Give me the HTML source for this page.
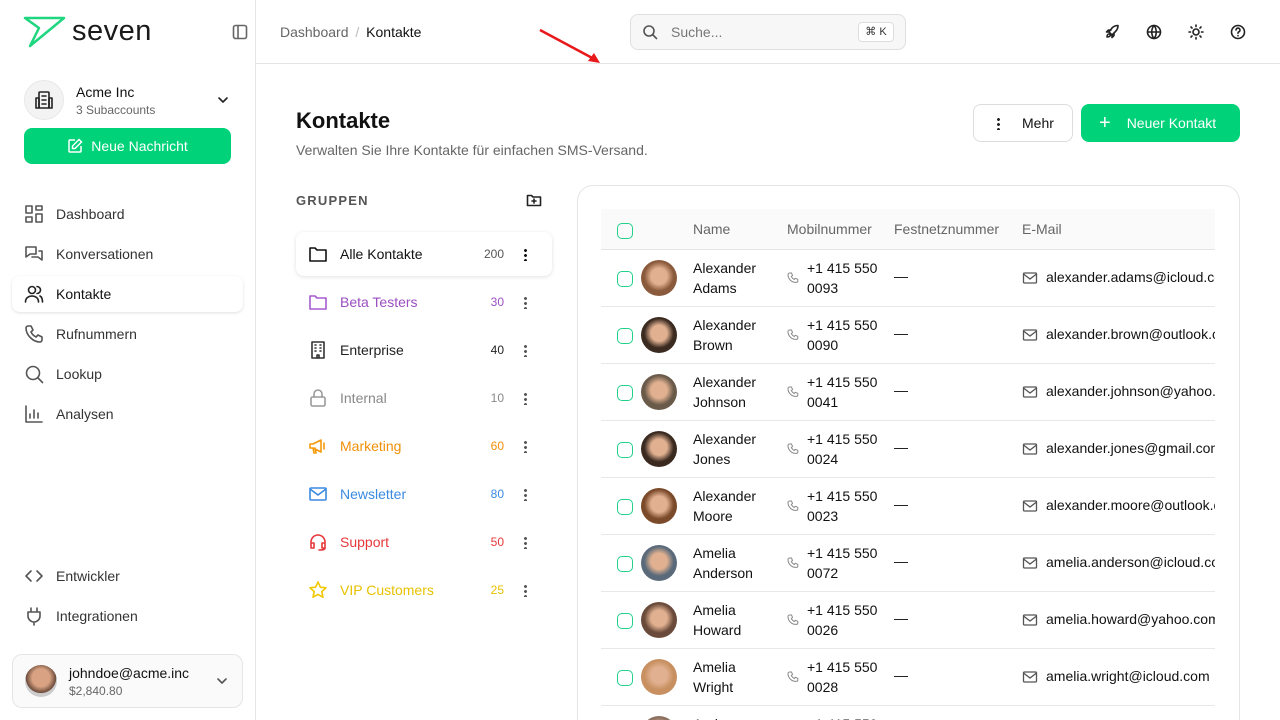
<!DOCTYPE html>
<html style="width:1280px;height:720px;overflow:hidden"><head><meta charset="utf-8"><style>
*{box-sizing:border-box;margin:0;padding:0}
body{width:1280px;height:720px;overflow:hidden;font-family:"Liberation Sans",sans-serif;color:#111;background:#fff;position:relative}
.sb{position:absolute;left:0;top:0;width:256px;height:720px;border-right:1px solid #e5e5e5;background:#fff}
.ab{position:absolute}
.nav{position:absolute;left:12px;width:231px;height:36px;border-radius:8px;display:flex;align-items:center;padding-left:12px;font-size:14px;color:#333}
.nav svg{width:20px;height:20px;margin-right:12px;fill:none;stroke:#555;stroke-width:1.6;stroke-linecap:round;stroke-linejoin:round}
.hdr{position:absolute;left:256px;top:0;right:0;height:64px;border-bottom:1px solid #e5e5e5}
.ico{fill:none;stroke:#222;stroke-width:1.6;stroke-linecap:round;stroke-linejoin:round}
.grp{position:absolute;left:296px;width:256px;height:44px;display:flex;align-items:center;padding-left:12px;font-size:14px;border-radius:8px}
.grp svg{width:20px;height:20px;margin-right:12px;fill:none;stroke-width:1.6;stroke-linecap:round;stroke-linejoin:round}
.grp .n{position:absolute;right:48px;font-size:12px}
.grp .d{position:absolute;right:25px;width:3px;height:13px;background:radial-gradient(circle,#555 1.3px,transparent 1.6px) 0 0/3px 5px repeat-y}
.row{position:absolute;left:0;width:614px;height:57px;border-bottom:1px solid #e8e8e8;font-size:14px;color:#111}
.row .cb{position:absolute;left:16px;top:21px;width:16px;height:16px;border:1.5px solid #22d08a;border-radius:5px}
.row .av{position:absolute;left:40px;top:10px;width:36px;height:36px;border-radius:50%}
.row .nm{position:absolute;left:92px;top:8px;line-height:20px}
.row .ph{position:absolute;left:186px;top:8px;line-height:20px;padding-left:20px}
.row .ph svg{position:absolute;left:0;top:14px}
.row .ds{position:absolute;left:293px;top:18px}
.row .em{position:absolute;left:421px;top:19px;padding-left:24px;white-space:nowrap;width:193px;overflow:hidden}
.row .em svg{position:absolute;left:0;top:1px}
.wrap{position:absolute;left:0;top:0;width:1280px;height:720px;overflow:hidden}
</style></head><body><div class="wrap">
<div class="sb">
<svg class="ab" style="left:23px;top:16px" width="44" height="32" viewBox="0 0 44 32"><path d="M2 2 L41 2 L7 30 L16 12 Z" fill="none" stroke="#1ed67f" stroke-width="2.5" stroke-linejoin="round"/></svg>
<div class="ab" style="left:72px;top:15px;font-size:29px;color:#1a1a1a;letter-spacing:0.5px">seven</div>
<svg class="ab ico" style="left:232px;top:24px;stroke:#666" width="16" height="16" viewBox="0 0 16 16"><rect x="1.5" y="1.5" width="13" height="13" rx="2"/><path d="M6 2v12"/></svg>
<div class="ab" style="left:24px;top:80px;width:40px;height:40px;border-radius:50%;background:#f3f3f3;border:1px solid #e8e8e8"></div>
<svg class="ab ico" style="left:34px;top:90px" width="20" height="20" viewBox="0 0 20 20"><rect x="5" y="2" width="10" height="16" rx="1"/><path d="M2 8h3v10H2zM15 8h3v10h-3zM8 6h4M8 10h4M8 14h4"/></svg>
<div class="ab" style="left:76px;top:84px;font-size:14px;color:#111">Acme Inc</div>
<div class="ab" style="left:76px;top:103px;font-size:12px;color:#666">3 Subaccounts</div>
<svg class="ab ico" style="left:216px;top:93px" width="14" height="14" viewBox="0 0 14 14"><path d="M3 5l4 4 4-4"/></svg>
<div class="ab" style="left:24px;top:128px;width:207px;height:36px;border-radius:8px;background:#00d27a;color:#fff;font-size:14px;display:flex;align-items:center;justify-content:center"><svg width="16" height="16" viewBox="0 0 16 16" style="margin-right:8px;fill:none;stroke:#fff;stroke-width:1.5"><path d="M8 2H3a1 1 0 0 0-1 1v10a1 1 0 0 0 1 1h10a1 1 0 0 0 1-1V8"/><path d="M12 1.5l2.5 2.5L8 10.5H5.5V8z"/></svg>Neue Nachricht</div>
<div class="nav" style="top:196px"><svg viewBox="0 0 20 20"><rect x="2" y="2" width="6" height="7"/><rect x="12" y="2" width="6" height="4"/><rect x="12" y="10" width="6" height="8"/><rect x="2" y="13" width="6" height="5"/></svg>Dashboard</div>
<div class="nav" style="top:236px"><svg viewBox="0 0 20 20"><path d="M2 3h10v7H6l-4 3zM8 13h6l4 3V7h-3"/></svg>Konversationen</div>
<div class="nav" style="top:276px;background:#fff;box-shadow:0 1px 3px rgba(0,0,0,.12);color:#111"><svg viewBox="0 0 20 20" style="stroke:#222"><circle cx="8" cy="6" r="3.5"/><path d="M1.5 18c0-4 3-6 6.5-6s6.5 2 6.5 6M13 2.5a3.5 3.5 0 0 1 0 7M16 12c1.5.8 2.5 3 2.5 6"/></svg>Kontakte</div>
<div class="nav" style="top:316px"><svg viewBox="0 0 20 20"><path d="M4 2h3l2 4-2 2c1 2 3 4 5 5l2-2 4 2v3c0 1-1 2-2 2C9 18 2 11 2 4c0-1 1-2 2-2z"/></svg>Rufnummern</div>
<div class="nav" style="top:356px"><svg viewBox="0 0 20 20"><circle cx="9" cy="9" r="6.5"/><path d="M14 14l4.5 4.5"/></svg>Lookup</div>
<div class="nav" style="top:396px"><svg viewBox="0 0 20 20"><path d="M2 2v16h16M6 14v-4M10 14V6M14 14V9"/></svg>Analysen</div>
<div class="nav" style="top:558px"><svg viewBox="0 0 20 20"><path d="M7 5l-5 5 5 5M13 5l5 5-5 5"/></svg>Entwickler</div>
<div class="nav" style="top:598px"><svg viewBox="0 0 20 20"><path d="M7 2v4M13 2v4M4 6h12v4a6 6 0 0 1-12 0zM10 16v3"/></svg>Integrationen</div>
<div class="ab" style="left:12px;top:654px;width:231px;height:54px;border:1px solid #e5e5e5;border-radius:10px;background:#fafafa"></div>
<div class="ab" style="left:25px;top:665px;width:32px;height:32px;border-radius:50%;background:radial-gradient(circle at 50% 40%,#d9a383 0 35%,#6b4a3a 60%,#ccc 62%)"></div>
<div class="ab" style="left:69px;top:665px;font-size:14px;color:#111">johndoe@acme.inc</div>
<div class="ab" style="left:69px;top:684px;font-size:12px;color:#666">$2,840.80</div>
<svg class="ab ico" style="left:215px;top:674px;stroke:#555" width="14" height="14" viewBox="0 0 14 14"><path d="M3 5l4 4 4-4"/></svg>
</div>
<div class="hdr">
<div class="ab" style="left:24px;top:24px;font-size:14px;color:#666">Dashboard <span style="color:#bbb;margin:0 3px">/</span> <span style="color:#111">Kontakte</span></div>
<div class="ab" style="left:374px;top:14px;width:276px;height:36px;border:1px solid #e0e0e0;border-radius:8px;background:#f7f7f7"></div>
<svg class="ab ico" style="left:386px;top:24px;stroke:#555" width="16" height="16" viewBox="0 0 16 16"><circle cx="7" cy="7" r="5"/><path d="M11 11l3.5 3.5"/></svg>
<div class="ab" style="left:415px;top:24px;font-size:14px;color:#777">Suche...</div>
<div class="ab" style="left:602px;top:22px;width:36px;height:20px;border:1px solid #ddd;border-radius:4px;background:#fff;font-size:11px;text-align:center;line-height:18px;color:#333">⌘ K</div>
<svg class="ab ico" style="left:848px;top:24px" width="16" height="16" viewBox="0 0 16 16"><path d="M3 13c0-2 1-3 2-3s2 1 1 2-3 1-3 1zM6 9l1 1M5 8l3-4c2-2 4-2.5 6-2.5 0 2-.5 4-2.5 6L8 11zM5 8H2.5l2-2H7M8 11v2.5l2-2V9"/></svg>
<svg class="ab ico" style="left:890px;top:24px" width="16" height="16" viewBox="0 0 16 16"><circle cx="8" cy="8" r="6.5"/><path d="M1.5 8h13M8 1.5c-3 3.5-3 9.5 0 13M8 1.5c3 3.5 3 9.5 0 13"/></svg>
<svg class="ab ico" style="left:932px;top:24px" width="16" height="16" viewBox="0 0 16 16"><circle cx="8" cy="8" r="3"/><path d="M8 1v1.5M8 13.5V15M1 8h1.5M13.5 8H15M3 3l1 1M12 12l1 1M3 13l1-1M12 4l1-1"/></svg>
<svg class="ab ico" style="left:974px;top:24px" width="16" height="16" viewBox="0 0 16 16"><circle cx="8" cy="8" r="6.5"/><path d="M6 6a2 2 0 1 1 2.5 2c-.5.2-.5.7-.5 1.2M8 11.5v.3"/></svg>
</div>
<svg class="ab" style="left:538px;top:28px" width="66" height="38" viewBox="0 0 66 38"><path d="M2 2L58 32" stroke="#e8191b" stroke-width="2.5"/><path d="M62 35L50 33L56 25Z" fill="#e8191b"/></svg>
<div class="ab" style="left:296px;top:108px;font-size:22px;font-weight:bold;color:#111">Kontakte</div>
<div class="ab" style="left:296px;top:142px;font-size:14px;color:#666">Verwalten Sie Ihre Kontakte für einfachen SMS-Versand.</div>
<div class="ab" style="left:973px;top:104px;width:100px;height:38px;border:1px solid #ddd;border-radius:8px;font-size:14px;display:flex;align-items:center;padding-left:23px"><span style="width:3px;height:13px;margin-right:22px;background:radial-gradient(circle,#222 1.3px,transparent 1.6px) 0 0/3px 5px repeat-y"></span>Mehr</div>
<div class="ab" style="left:1081px;top:104px;width:159px;height:38px;border-radius:8px;background:#00d27a;color:#fff;font-size:14px;display:flex;align-items:center;padding-left:18px"><span style="font-size:20px;margin-right:16px;font-weight:300">+</span>Neuer Kontakt</div>
<div class="ab" style="left:296px;top:193px;font-size:13px;color:#555;letter-spacing:1.2px;font-weight:bold">GRUPPEN</div>
<svg class="ab ico" style="left:526px;top:192px" width="16" height="16" viewBox="0 0 16 16"><path d="M1.5 3.5h4l1.5 1.5h7.5v8.5h-13zM8 7v4M6 9h4"/></svg>
<div class="grp" style="top:232px;background:#fff;box-shadow:0 1px 4px rgba(0,0,0,.12);color:#111"><svg viewBox="0 0 20 20" style="stroke:#111"><path d="M2 4h5l2 2h9v11H2z"/></svg>Alle Kontakte<span class="n" style="color:#555">200</span><span class="d" style="background-image:radial-gradient(circle,#111 1.3px,transparent 1.6px)"></span></div>
<div class="grp" style="top:280px;color:#9b4fc0"><svg viewBox="0 0 20 20" style="stroke:#a55bd0"><path d="M2 4h5l2 2h9v11H2z"/></svg>Beta Testers<span class="n">30</span><span class="d"></span></div>
<div class="grp" style="top:328px;color:#222"><svg viewBox="0 0 20 20" style="stroke:#333"><rect x="4" y="2" width="12" height="16"/><path d="M7 5h1M12 5h1M7 8h1M12 8h1M7 11h1M12 11h1M9 18v-3h2v3"/></svg>Enterprise<span class="n">40</span><span class="d"></span></div>
<div class="grp" style="top:376px;color:#888"><svg viewBox="0 0 20 20" style="stroke:#999"><rect x="3" y="9" width="14" height="9" rx="1.5"/><path d="M6 9V6a4 4 0 0 1 8 0v3"/></svg>Internal<span class="n">10</span><span class="d"></span></div>
<div class="grp" style="top:424px;color:#f0900a"><svg viewBox="0 0 20 20" style="stroke:#f59a0a"><path d="M2 8v4h3l8 4V4L5 8zM5 12l1 5h2l-1-5M16 7v6"/></svg>Marketing<span class="n">60</span><span class="d"></span></div>
<div class="grp" style="top:472px;color:#3a8ae0"><svg viewBox="0 0 20 20" style="stroke:#3a8ae0"><rect x="2" y="4" width="16" height="12" rx="1"/><path d="M2 5l8 6 8-6"/></svg>Newsletter<span class="n">80</span><span class="d"></span></div>
<div class="grp" style="top:520px;color:#e5383b"><svg viewBox="0 0 20 20" style="stroke:#e5383b"><path d="M3 13v-3a7 7 0 0 1 14 0v3M3 11h3v5H3zM14 11h3v5h-3zM17 16c0 2-3 2-6 2"/></svg>Support<span class="n">50</span><span class="d"></span></div>
<div class="grp" style="top:568px;color:#e8c200"><svg viewBox="0 0 20 20" style="stroke:#f0c800"><path d="M10 2l2.4 5.2 5.6.6-4.2 3.8 1.2 5.6L10 14.4 5 17.2l1.2-5.6L2 7.8l5.6-.6z"/></svg>VIP Customers<span class="n">25</span><span class="d"></span></div>
<div class="ab" style="left:577px;top:185px;width:663px;height:535px;border:1px solid #e5e5e5;border-bottom:none;border-radius:16px 16px 0 0"></div>
<div class="ab" style="left:601px;top:209px;width:614px;height:41px;background:#fafafa;border-bottom:1px solid #e5e5e5;font-size:14px;color:#666">
<div class="ab" style="left:16px;top:14px;width:16px;height:16px;border:1.5px solid #22d08a;border-radius:5px"></div>
<span class="ab" style="left:92px;top:12px">Name</span><span class="ab" style="left:186px;top:12px">Mobilnummer</span><span class="ab" style="left:293px;top:12px">Festnetznummer</span><span class="ab" style="left:421px;top:12px">E-Mail</span></div>
<div id="rows" class="ab" style="left:601px;top:250px;width:614px;height:470px;overflow:hidden"></div>
</div>
<script>
var d=[["Alexander","Adams","0093","alexander.adams@icloud.com","#8a5a3c"],["Alexander","Brown","0090","alexander.brown@outlook.com","#3a2a20"],["Alexander","Johnson","0041","alexander.johnson@yahoo.com","#6a5a4a"],["Alexander","Jones","0024","alexander.jones@gmail.com","#3a2a20"],["Alexander","Moore","0023","alexander.moore@outlook.com","#7a4a2a"],["Amelia","Anderson","0072","amelia.anderson@icloud.com","#5a6a7a"],["Amelia","Howard","0026","amelia.howard@yahoo.com","#6a4a3a"],["Amelia","Wright","0028","amelia.wright@icloud.com","#c89060"],["Andrew","Baker","0031","andrew.baker@gmail.com","#8a7060"]];
var h="";d.forEach(function(r,i){h+='<div class="row" style="top:'+(i*57)+'px"><div class="cb"></div><div class="av" style="background:radial-gradient(circle at 50% 45%,#e0b090 0 30%,'+r[4]+' 55%)"></div><div class="nm">'+r[0]+'<br>'+r[1]+'</div><div class="ph"><svg width="12" height="12" viewBox="0 0 12 12" fill="none" stroke="#888" stroke-width="1"><path d="M2.5 1h2l1 2.5-1.2 1c.6 1.3 1.7 2.4 3 3l1-1.2 2.5 1v2c0 .5-.5 1-1 1C5 11 1 7 1 2.5c0-.5.5-1.5 1.5-1.5z"/></svg>+1 415 550<br>'+r[2]+'</div><div class="ds">—</div><div class="em"><svg width="16" height="16" viewBox="0 0 16 16" fill="none" stroke="#555" stroke-width="1.3"><rect x="1.5" y="3" width="13" height="10" rx="1"/><path d="M1.5 4l6.5 5 6.5-5"/></svg>'+r[3]+'</div></div>'});
document.getElementById("rows").innerHTML=h;
</script>
</body></html>
